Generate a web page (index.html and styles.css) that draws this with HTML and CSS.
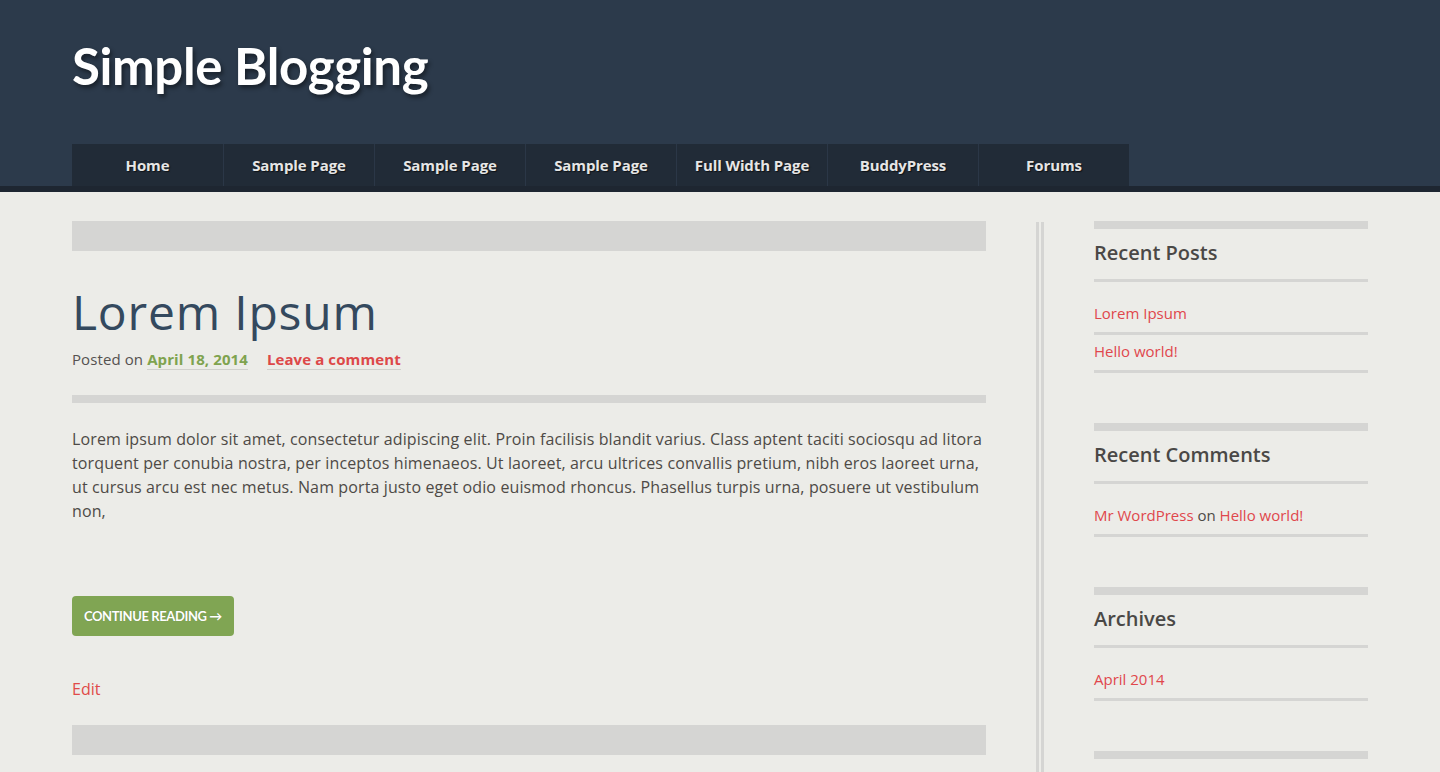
FILE: index.html
```html
<!DOCTYPE html>
<html lang="en">
<head>
<meta charset="utf-8">
<title>Simple Blogging</title>
<link rel="stylesheet" href="styles.css">
</head>
<body>
<header class="site-header">
  <div class="wrap">
    <h1 class="site-title">Simple Blogging</h1>
    <nav class="main-nav">
      <a class="nav-item" href="#">Home</a>
      <a class="nav-item" href="#">Sample Page</a>
      <a class="nav-item" href="#">Sample Page</a>
      <a class="nav-item" href="#">Sample Page</a>
      <a class="nav-item" href="#">Full Width Page</a>
      <a class="nav-item" href="#">BuddyPress</a>
      <a class="nav-item" href="#">Forums</a>
    </nav>
  </div>
</header>
<div class="header-strip"></div>
<div class="wrap page">
  <main class="content">
    <div class="bar"></div>
    <article class="post">
      <h2 class="post-title">Lorem Ipsum</h2>
      <div class="meta">Posted on <a class="date" href="#">April 18, 2014</a><a class="comments" href="#">Leave a comment</a></div>
      <div class="thin-bar"></div>
      <p class="excerpt">Lorem ipsum dolor sit amet, consectetur adipiscing elit. Proin facilisis blandit varius. Class aptent taciti sociosqu ad litora torquent per conubia nostra, per inceptos himenaeos. Ut laoreet, arcu ultrices convallis pretium, nibh eros laoreet urna, ut cursus arcu est nec metus. Nam porta justo eget odio euismod rhoncus. Phasellus turpis urna, posuere ut vestibulum non,</p>
      <a class="btn" href="#">CONTINUE READING →</a>
      <a class="edit" href="#">Edit</a>
    </article>
    <div class="bar"></div>
    <article class="post">
      <h2 class="post-title">Hello world!</h2>
    </article>
  </main>
  <div class="divider"></div>
  <aside class="sidebar">
    <section class="widget">
      <h3 class="widget-title">Recent Posts</h3>
      <ul class="widget-list">
        <li><a href="#">Lorem Ipsum</a></li>
        <li><a href="#">Hello world!</a></li>
      </ul>
    </section>
    <section class="widget">
      <h3 class="widget-title">Recent Comments</h3>
      <ul class="widget-list">
        <li><a href="#">Mr WordPress</a> on <a href="#">Hello world!</a></li>
      </ul>
    </section>
    <section class="widget">
      <h3 class="widget-title">Archives</h3>
      <ul class="widget-list">
        <li><a href="#">April 2014</a></li>
      </ul>
    </section>
    <section class="widget">
      <h3 class="widget-title">Categories</h3>
      <ul class="widget-list">
        <li><a href="#">Uncategorized</a></li>
      </ul>
    </section>
  </aside>
</div>
</body>
</html>
```

FILE: styles.css
```css
* { box-sizing: border-box; }
html, body { margin: 0; padding: 0; }
body {
  background: #ecece8;
  font-family: "Open Sans", "Liberation Sans", sans-serif;
  color: #4e4a46;
}
a { text-decoration: none; }

.wrap {
  width: 1296px;
  margin: 0 0 0 72px;
}

.site-header {
  background: #2c3a4b;
  height: 186px;
}
.site-header .wrap {
  display: flex;
  flex-direction: column;
  height: 186px;
}
.site-title {
  margin: 0;
  padding-top: 36px;
  font-family: Lato, "Open Sans", sans-serif;
  font-weight: 700;
  font-size: 51px;
  line-height: 60px;
  letter-spacing: -0.4px;
  color: #ffffff;
  text-shadow: 2px 3px 4px rgba(0, 0, 0, 0.45);
}
.main-nav {
  display: flex;
  margin-top: auto;
  width: 1057px;
  background: #212b37;
  height: 42px;
}
.nav-item {
  width: 151px;
  height: 42px;
  line-height: 42px;
  text-align: center;
  font-family: "Open Sans", sans-serif;
  font-weight: 700;
  font-size: 15px;
  color: #e6e6e6;
  text-shadow: 1px 1px 1px rgba(0, 0, 0, 0.6);
  border-left: 1px solid #2b3747;
  letter-spacing: -0.1px;
}
.nav-item:first-child { border-left: none; }

.header-strip {
  height: 6px;
  background: #1e2631;
}

.page {
  display: flex;
  align-items: stretch;
  padding-top: 29px;
}

.content {
  width: 914px;
  flex: none;
}
.bar {
  height: 30px;
  background: #d5d5d3;
}
.thin-bar {
  height: 8px;
  background: #d5d5d3;
  margin-top: 25px;
  align-self: stretch;
}
.post {
  padding: 32px 0 24px;
  display: flex;
  flex-direction: column;
  align-items: flex-start;
}
.post-title {
  margin: 0;
  font-size: 48px;
  line-height: 58px;
  font-weight: 500;
  color: #34495e;
  letter-spacing: 0.8px;
}
.meta {
  margin-top: 7px;
  font-size: 15px;
  line-height: 22px;
  color: #555250;
  align-self: stretch;
  letter-spacing: 0.1px;
}
.meta .date {
  font-weight: 700;
  color: #7fa34f;
  border-bottom: 1px solid #d0d0cc;
}
.meta .comments {
  font-weight: 700;
  color: #dd4848;
  margin-left: 19px;
  border-bottom: 1px solid #d0d0cc;
}
.excerpt {
  margin: 24px 0 0;
  font-size: 16px;
  line-height: 24px;
  color: #4e4a46;
  letter-spacing: 0.12px;
}
.btn {
  margin-top: 73px;
  height: 40px;
  line-height: 40px;
  padding: 0 12px;
  background: #80a553;
  border-radius: 4px;
  color: #ffffff;
  font-family: Lato, "Open Sans", sans-serif;
  font-weight: 700;
  font-size: 13px;
  letter-spacing: -0.4px;
  text-shadow: 0 0 1px rgba(0, 0, 0, 0.2);
}
.edit {
  margin-top: 41px;
  font-size: 16px;
  line-height: 24px;
  color: #e04a4a;
}

.divider {
  flex: none;
  width: 8px;
  margin: 1px 50px 0;
  border-left: 3px solid #d5d5d3;
  border-right: 3px solid #d5d5d3;
}

.sidebar {
  width: 274px;
  flex: none;
}
.widget {
  border-top: 8px solid #d5d5d3;
  margin-bottom: 50px;
}
.widget-title {
  margin: 10px 0 0;
  font-size: 20px;
  line-height: 28px;
  font-weight: 600;
  color: #4a4846;
  padding-bottom: 12px;
  border-bottom: 3px solid #d5d5d3;
}
.widget-list {
  list-style: none;
  margin: 15px 0 0;
  padding: 0;
}
.widget-list li {
  padding: 5px 0 8px;
  font-size: 15px;
  line-height: 22px;
  color: #4e4a46;
  border-bottom: 3px solid #d5d5d3;
}
.widget-list a { color: #e0474c; }
```
